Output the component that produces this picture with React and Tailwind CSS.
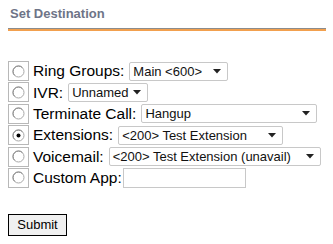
import React from 'react';

const rows = [
    { label: 'Ring Groups:', value: 'Main <600>', width: 'w-[99px]' },
    { label: 'IVR:', value: 'Unnamed', width: 'w-[80px]' },
    { label: 'Terminate Call:', value: 'Hangup', width: 'w-[176px]' },
    { label: 'Extensions:', value: '<200> Test Extension', width: 'w-[165px]', checked: true },
    { label: 'Voicemail:', value: '<200> Test Extension (unavail)', width: 'w-[212px]' },
];

// old windows style radio
const Radio = ({ checked }) => (
    <svg width="13" height="13" viewBox="0 0 13 13">
        <circle cx="6.5" cy="6.5" r="5.5" fill="#fff" stroke="#a8a8a8" />
        <path d="M2.6 10.4 A5.5 5.5 0 0 1 10.4 2.6" fill="none" stroke="#888" />
        {checked && <circle cx="6.5" cy="6.5" r="2" fill="#000" />}
    </svg>
);

const Caret = () => (
    <svg width="8" height="5" viewBox="0 0 8 5" className="ml-auto">
        <path d="M0 0 L8 0 L4 4.5 Z" fill="#222" />
    </svg>
);

const Select = ({ value, width }) => (
    <div className={`${width} h-[19px] flex items-center border border-[#c8c8c8] rounded-[2px] bg-white pl-[3px] pr-[6px] text-[13px] text-[#111] leading-none whitespace-nowrap`}>
        <span>{value}</span>
        <Caret />
    </div>
);

const RadioCell = ({ checked }) => (
    <div className="w-[21px] h-[20px] border border-[#b8b8b8] flex items-center justify-center shrink-0">
        <Radio checked={checked} />
    </div>
);

export default function App() {
    return (
        <div className="w-[333px] h-[244px] bg-white font-['Liberation_Sans',Arial,sans-serif] overflow-hidden">
            <div className="pt-[6px] px-[8px]">
                <h3 className="pl-[2px] text-[13px] font-bold text-[#6e7487] leading-[16px]">Set Destination</h3>
                <div className="mt-[6px] w-[318px] border-t border-[#8c8c8c] border-b-2 border-b-[#f2a04e] h-0" />
            </div>

            <div className="mt-[30px] ml-[8px] flex flex-col gap-[1.4px]">
                {rows.map(r => (
                    <div key={r.label} className="flex items-center h-[20px]">
                        <RadioCell checked={r.checked} />
                        <span className="ml-[4px] text-[15.5px] leading-none text-black whitespace-nowrap">{r.label}</span>
                        <div className="ml-[5px]">
                            <Select value={r.value} width={r.width} />
                        </div>
                    </div>
                ))}
                <div className="flex items-center h-[20px]">
                    <RadioCell />
                    <span className="ml-[4px] text-[15.5px] leading-none text-black whitespace-nowrap">Custom App:</span>
                    <div className="ml-[1px] w-[123px] h-[20px] border border-[#c8c8c8] bg-white" />
                </div>
            </div>

            <button className="mt-[26px] ml-[8px] w-[59px] h-[22px] border border-black bg-[#f0f0f0] text-[13px] text-black leading-none">
                Submit
            </button>
        </div>
    );
}
